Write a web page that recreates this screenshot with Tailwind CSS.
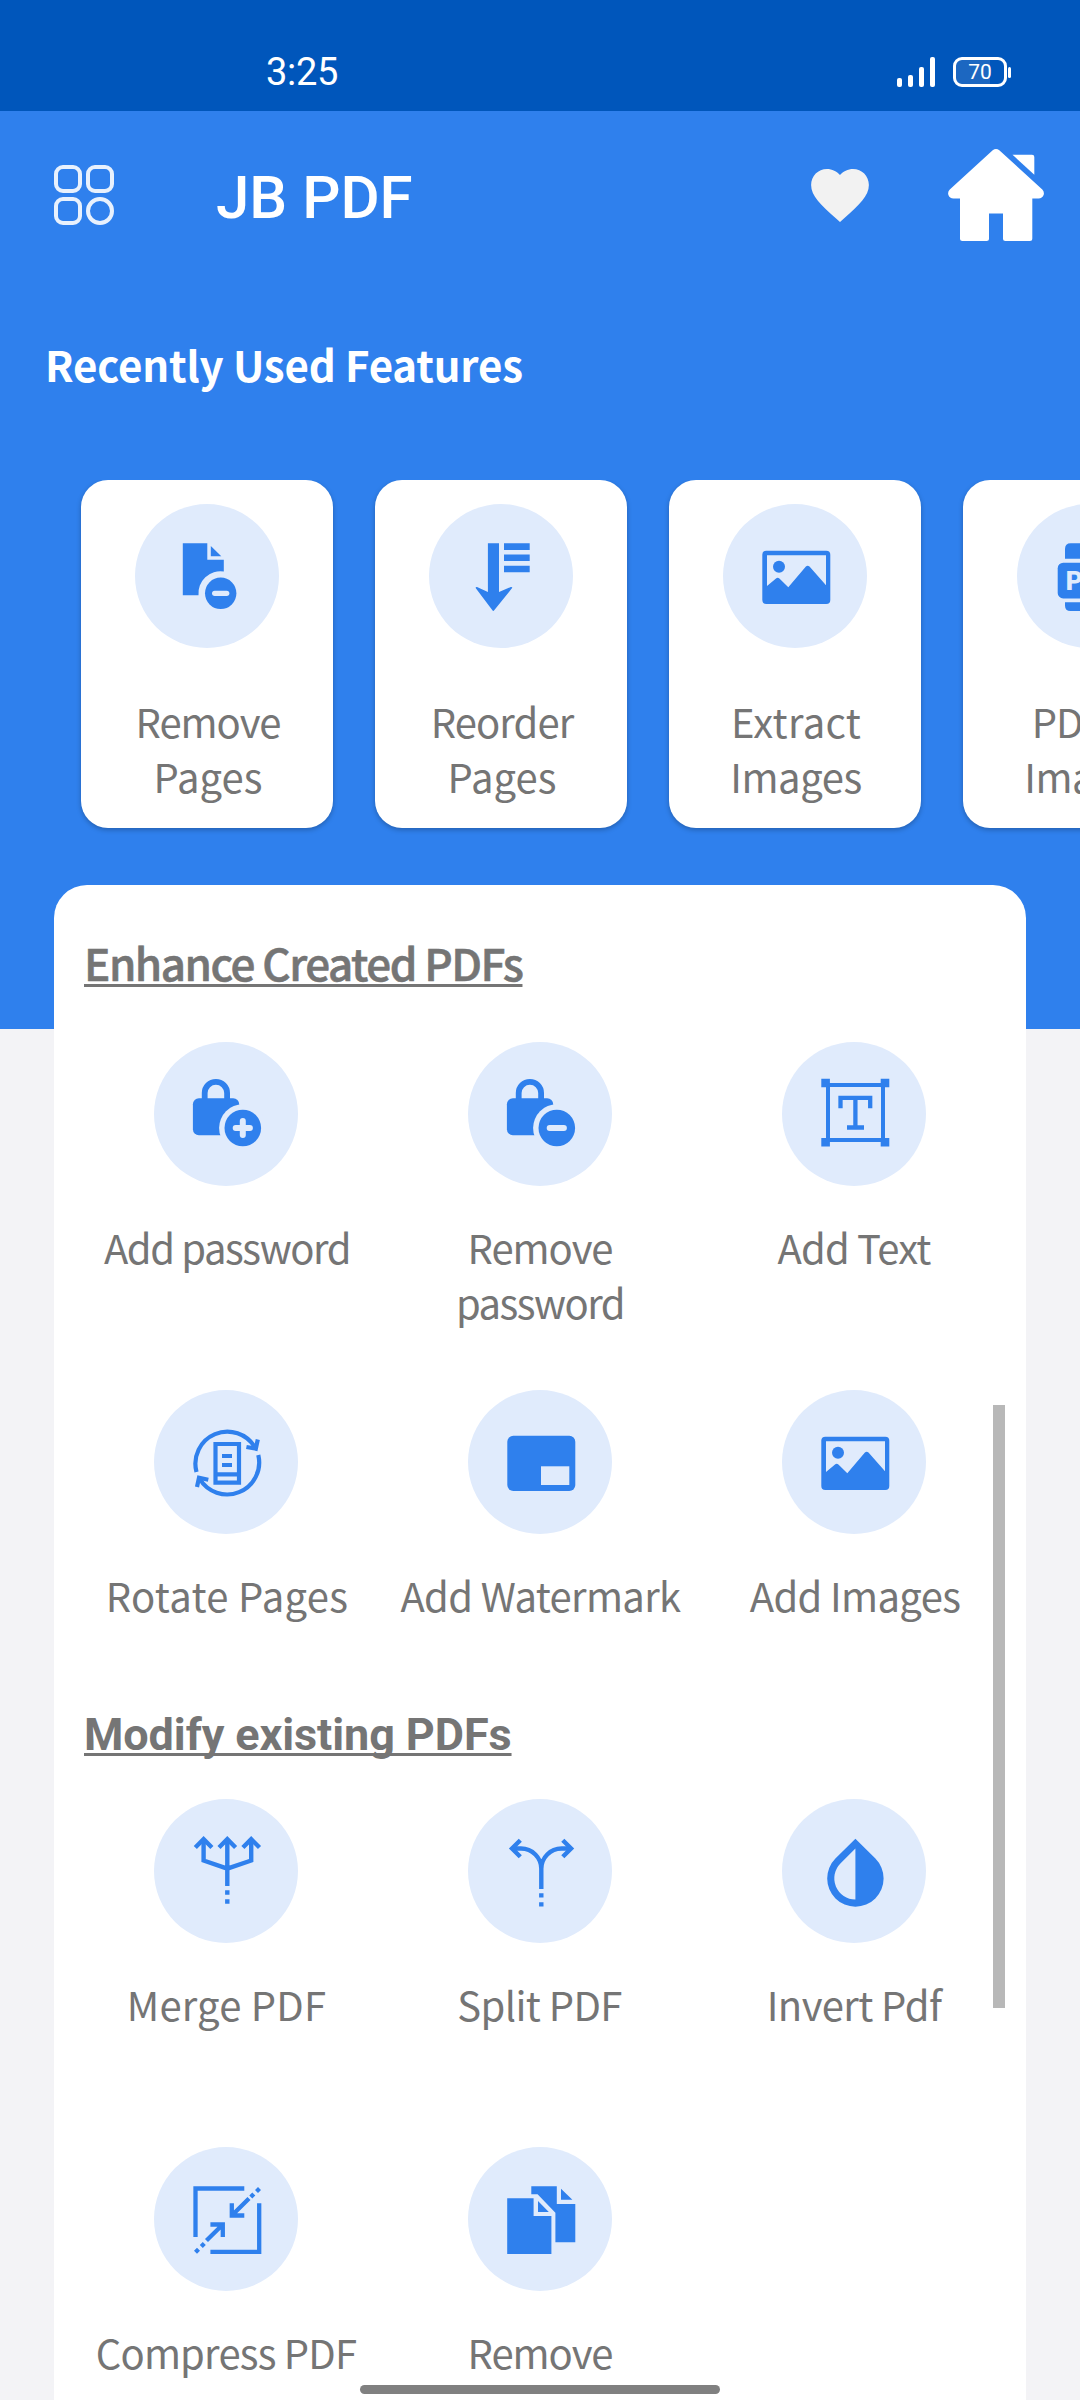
<!DOCTYPE html>
<html lang="en">
<head>
<meta charset="utf-8">
<title>JB PDF</title>
<script src="https://cdn.jsdelivr.net/npm/@tailwindcss/browser@4"></script>
</head>
<body class="bg-[#f3f3f6]">
<svg class="hidden">
  <symbol id="image" viewBox="0 0 144 144">
    <rect x="39.3" y="46.7" width="68" height="53.3" rx="4" fill="#2f80ed"/>
    <path fill="#e0ebfc" d="M44 51.3H103V81.3L86.5 62.6Q84.7 60.8 82.9 62.6L65.3 83.3L56.4 74.6Q54.7 73 53 74.6L44 82Z"/>
    <circle cx="56" cy="62.7" r="6" fill="#2f80ed"/>
  </symbol>
  <symbol id="lock" viewBox="0 0 144 144">
    <path fill="none" stroke="#2f80ed" stroke-width="5.8" d="M50.7 58V51a11.2 11.2 0 0 1 22.4 0V58"/>
    <rect x="38.9" y="56.3" width="46.3" height="37" rx="6" fill="#2f80ed"/>
    <circle cx="88.8" cy="86" r="23.7" fill="#e0ebfc"/>
    <circle cx="88.8" cy="86" r="18.3" fill="#2f80ed"/>
    <path stroke="#e0ebfc" stroke-width="6" stroke-linecap="round" d="M81.7 86H95.9"/>
  </symbol>
</svg>

<div class="relative h-[2400px] w-[1080px] overflow-hidden bg-[#f3f3f6] font-['Noto_Sans_CJK_SC',sans-serif] text-[#757575]">

  <header class="h-[1029px] bg-[#2f80ed] text-white">
    <!-- Status bar -->
    <div class="flex h-[111px] items-start justify-between bg-[#0056bb] pt-[57px] pr-[69px] pl-[266px]">
      <span class="mt-[-7px] font-[Roboto,sans-serif] text-[38px] leading-[45px] tracking-[-0.3px]">3:25</span>
      <div class="flex items-end gap-[18px]">
        <div class="flex h-[30px] items-end gap-[6px]">
          <span class="h-[9px] w-[5px] rounded-xs bg-white"></span>
          <span class="h-[12px] w-[5px] rounded-xs bg-white"></span>
          <span class="h-[20px] w-[5px] rounded-xs bg-white"></span>
          <span class="h-[30px] w-[5px] rounded-xs bg-white"></span>
        </div>
        <div class="flex items-center gap-px">
          <div class="flex h-[30px] w-[54px] items-center justify-center rounded-[9px] border-3 border-white bg-linear-to-r from-[#1c67c1] from-70% to-[#0056bb] to-70% font-[Roboto,sans-serif] text-[21px] leading-none">70</div>
          <span class="h-[11px] w-[3px] rounded-xs bg-white"></span>
        </div>
      </div>
    </div>

    <!-- App bar -->
    <div class="flex h-[168px] items-center pr-[36px] pl-[54px]">
      <svg class="size-[60px]" viewBox="0 0 60 60" fill="none" stroke="#e8f1fd" stroke-width="4">
        <rect x="2" y="2" width="24" height="24" rx="7"/><rect x="34" y="2" width="24" height="24" rx="7"/>
        <rect x="2" y="34" width="24" height="24" rx="7"/><circle cx="46" cy="46" r="12"/>
      </svg>
      <h1 class="ml-[102px] pt-[5px] font-[Roboto,sans-serif] text-[60px] leading-[72px] font-medium">JB PDF</h1>
      <svg class="ml-auto h-[53px] w-[58px]" viewBox="2 3 20 18.35" fill="#f2f2f2"><path d="M12 21.35l-1.45-1.32C5.4 15.36 2 12.28 2 8.5 2 5.42 4.42 3 7.5 3c1.74 0 3.41.81 4.5 2.09C13.09 3.81 14.76 3 16.5 3 19.58 3 22 5.42 22 8.5c0 3.78-3.4 6.86-8.55 11.54L12 21.35z"/></svg>
      <svg class="ml-[79px] h-[92px] w-[96px]" viewBox="948 149 96 92" fill="#fff">
        <path d="M992.7 150.3Q996 147.8 999.3 150.3L1042.3 189.5Q1044.6 192 1043.6 195Q1042.3 198.4 1038.5 198.4H1032.3V238.5Q1032.3 241 1029.8 241H1005.5Q1003 241 1003 238.5V213.5H989V238.5Q989 241 986.5 241H962.5Q960 241 960 238.5V198.4H953.5Q949.5 198.4 948.4 195Q947.4 192 949.8 189.5Z"/>
        <path d="M1012.5 154.7H1032Q1034.3 154.7 1034.3 157V174.7Z"/>
      </svg>
    </div>

    <h2 class="mt-[55px] pl-[45px] text-[42px] leading-[60px] font-bold tracking-[-0.15px]">Recently Used Features</h2>

    <div class="mt-[86px] flex gap-[42px] overflow-hidden pb-4 pl-[81px] text-[40px] leading-[55px] text-[#757575]">
      <div class="flex h-[348px] w-[252px] shrink-0 flex-col items-center rounded-[27px] bg-white pt-[24px] shadow-[0_2px_5px_rgba(0,0,0,0.25)]">
        <div class="size-[144px] shrink-0 rounded-full bg-[#e0ebfc]">
          <svg viewBox="0 0 144 144" fill="#2f80ed">
            <path d="M47.8 39.3H72.3V55.7H88.8V67.5A22 22 0 0 0 63.5 91.3H47.8Z"/><path d="M75.8 42L86.3 52.3H75.8Z"/>
            <circle cx="85.7" cy="89.3" r="15.7"/><path stroke="#e0ebfc" stroke-width="5.3" stroke-linecap="round" d="M79.7 89.3H91.7"/>
          </svg>
        </div>
        <p class="mt-[46px] pl-[2px] text-center"><span class="tracking-[-1px]">Remove</span><br>Pages</p>
      </div>
      <div class="flex h-[348px] w-[252px] shrink-0 flex-col items-center rounded-[27px] bg-white pt-[24px] shadow-[0_2px_5px_rgba(0,0,0,0.25)]">
        <div class="size-[144px] shrink-0 rounded-full bg-[#e0ebfc]">
          <svg viewBox="0 0 144 144" fill="#2f80ed">
            <path d="M58.9 39.3H70V88L81.8 83Q84.2 82.8 82.7 84.6L65.2 106.2Q64.3 107.7 63.4 106.2L47 84.6Q46 82.8 48 83L58.9 88Z"/>
            <path d="M75 39.3H100.7V46H75ZM75 50.5H100.7V57H75ZM75 61.7H100.7V68.2H75Z"/>
          </svg>
        </div>
        <p class="mt-[46px] pl-[2px] text-center"><span class="tracking-[-0.9px]">Reorder</span><br>Pages</p>
      </div>
      <div class="flex h-[348px] w-[252px] shrink-0 flex-col items-center rounded-[27px] bg-white pt-[24px] shadow-[0_2px_5px_rgba(0,0,0,0.25)]">
        <div class="size-[144px] shrink-0 rounded-full bg-[#e0ebfc]"><svg viewBox="0 0 144 144"><use href="#image"/></svg></div>
        <p class="mt-[46px] pl-[2px] text-center"><span class="tracking-[0.3px]">Extract</span><br><span class="tracking-[-0.4px]">Images</span></p>
      </div>
      <div class="flex h-[348px] w-[252px] shrink-0 flex-col items-center rounded-[27px] bg-white pt-[24px] shadow-[0_2px_5px_rgba(0,0,0,0.25)]">
        <div class="size-[144px] shrink-0 rounded-full bg-[#e0ebfc]">
          <svg viewBox="0 0 144 144" fill="#2f80ed">
            <path d="M48 54.7V45Q48 39.3 53.7 39.3H84L98 54.7Z"/>
            <rect x="40.7" y="58.7" width="66" height="35.7" rx="5.5"/>
            <path d="M48 98.3H98V101.5Q98 107 92.5 107H53.5Q48 107 48 101.5Z"/>
            <text x="48.7" y="86" fill="#e0ebfc" class="font-[Roboto,sans-serif] text-[26px] font-black">PDF</text>
          </svg>
        </div>
        <p class="mt-[46px] pl-[2px] text-center"><span class="tracking-[-1px]">PDF to</span><br><span class="tracking-[-0.4px]">Images</span></p>
      </div>
    </div>
  </header>

  <main class="relative mt-[-144px] ml-[54px] h-[1515px] w-[972px] rounded-t-[33px] bg-white px-[15px] pt-[45px]">
    <h2 class="pl-[15px] text-[44px] leading-[64px] font-medium tracking-[-1.5px] [-webkit-text-stroke:0.6px_#757575]"><span class="underline decoration-3 underline-offset-3 [text-decoration-skip-ink:none]">Enhance Created PDFs</span></h2>

    <div class="mt-[48px] grid grid-cols-3 gap-y-[36px] text-center text-[40px] leading-[55px]">
      <div class="flex h-[312px] flex-col items-center">
        <div class="size-[144px] rounded-full bg-[#e0ebfc]"><svg viewBox="0 0 144 144"><use href="#lock"/><path stroke="#e0ebfc" stroke-width="6" stroke-linecap="round" d="M88.8 78.9V93.1"/></svg></div>
        <p class="mt-[34px] pl-[2px] tracking-[-1.4px]">Add password</p>
      </div>
      <div class="flex h-[312px] flex-col items-center">
        <div class="size-[144px] rounded-full bg-[#e0ebfc]"><svg viewBox="0 0 144 144"><use href="#lock"/></svg></div>
        <p class="mt-[34px]"><span class="tracking-[-1px]">Remove</span><br><span class="tracking-[-1.5px]">password</span></p>
      </div>
      <div class="flex h-[312px] flex-col items-center">
        <div class="size-[144px] rounded-full bg-[#e0ebfc]">
          <svg viewBox="0 0 144 144" fill="#2f80ed">
            <rect x="46" y="43" width="55" height="55" fill="none" stroke="#2f80ed" stroke-width="4"/>
            <path d="M39.3 36.7h8.6v8.6h-8.6ZM98.7 36.7h8.6v8.6h-8.6ZM39.3 96h8.6v8.6h-8.6ZM98.7 96h8.6v8.6h-8.6Z"/>
            <path fill="none" stroke="#2f80ed" stroke-width="4.3" d="M58.5 66.3V55.8H88.2V66.3M73.4 55.8V85.5M65 85.5H82"/>
          </svg>
        </div>
        <p class="mt-[34px] tracking-[-0.8px]">Add Text</p>
      </div>
      <div class="flex h-[312px] flex-col items-center">
        <div class="size-[144px] rounded-full bg-[#e0ebfc]">
          <svg viewBox="0 0 144 144" fill="none" stroke="#2f80ed" stroke-width="4.2">
            <path d="M42.5 82A32 32 0 0 1 101 57.5M104.3 65A32 32 0 0 1 45.5 88.5"/>
            <path d="M103.8 49.5L101.8 58.7L92.4 57M43 97L45 87.8L54.3 89.7"/>
            <path d="M61.5 54H85V92.7H61.5ZM61.5 84.3H85M68 66H78M68 75H78"/>
          </svg>
        </div>
        <p class="mt-[34px] pl-[2px] tracking-[0.3px]">Rotate Pages</p>
      </div>
      <div class="flex h-[312px] flex-col items-center">
        <div class="size-[144px] rounded-full bg-[#e0ebfc]">
          <svg viewBox="0 0 144 144"><rect x="39.3" y="45.7" width="68" height="55.3" rx="6" fill="#2f80ed"/><path fill="#e0ebfc" d="M73 76.3H101.3V95H73Z"/></svg>
        </div>
        <p class="mt-[34px] pl-px tracking-[-0.65px]">Add Watermark</p>
      </div>
      <div class="flex h-[312px] flex-col items-center">
        <div class="size-[144px] rounded-full bg-[#e0ebfc]"><svg viewBox="0 0 144 144"><use href="#image"/></svg></div>
        <p class="mt-[34px] pl-[2px] tracking-[-0.65px]">Add Images</p>
      </div>
    </div>

    <h2 class="pt-px pl-[15px] font-[Roboto,sans-serif] text-[45px] leading-[64px] font-bold tracking-[-0.1px]"><span class="underline decoration-3 underline-offset-3 [text-decoration-skip-ink:none]">Modify existing PDFs</span></h2>

    <div class="mt-[32px] grid grid-cols-3 gap-y-[36px] text-center text-[40px] leading-[55px]">
      <div class="flex h-[312px] flex-col items-center">
        <div class="size-[144px] rounded-full bg-[#e0ebfc]">
          <svg viewBox="0 0 144 144" fill="none" stroke="#2f80ed" stroke-width="4.4">
            <path d="M49.6 40V61.5L73.3 69.7L97.2 61.5V40M73.3 40V87M73.3 91.3V95.7M73.3 100.3V104.7"/>
            <path d="M41.3 48.5L49.6 40.2L57.9 48.5M65 48.5L73.3 40.2L81.6 48.5M88.9 48.5L97.2 40.2L105.5 48.5"/>
          </svg>
        </div>
        <p class="mt-[34px] pl-px tracking-[0.2px]">Merge PDF</p>
      </div>
      <div class="flex h-[312px] flex-col items-center">
        <div class="size-[144px] rounded-full bg-[#e0ebfc]">
          <svg viewBox="0 0 144 144" fill="none" stroke="#2f80ed" stroke-width="4.4">
            <path d="M44 49.5H53A20.3 20.3 0 0 1 73.3 69.8V90M102.6 49.5H93.6A20.3 20.3 0 0 0 73.3 69.8M73.3 94.2V98.6M73.3 103.2V107.6"/>
            <path d="M52.3 41.2L44 49.5L52.3 57.8M94.8 41.2L103.1 49.5L94.8 57.8"/>
          </svg>
        </div>
        <p class="mt-[34px] pr-px tracking-[-0.6px]">Split PDF</p>
      </div>
      <div class="flex h-[312px] flex-col items-center">
        <div class="size-[144px] rounded-full bg-[#e0ebfc]">
          <svg viewBox="0 0 144 144" fill="#2f80ed"><path d="M73.4 39.7L93.4 59.6A28.2 28.2 0 1 1 53.4 59.6Z"/><path fill="#e0ebfc" d="M73.4 49.5V100.6A21.2 21.2 0 0 1 58.4 64.5Z"/></svg>
        </div>
        <p class="mt-[34px] tracking-[-0.6px]">Invert Pdf</p>
      </div>
      <div class="flex h-[312px] flex-col items-center">
        <div class="size-[144px] rounded-full bg-[#e0ebfc]">
          <svg viewBox="0 0 144 144" fill="none" stroke="#2f80ed" stroke-width="4.3">
            <path d="M41.5 90V41.5H90.3M105.2 56.3V104.9H56.4"/>
            <path d="M77.8 56.3V68.5H90.3M77.8 68.5L95 51.5M56.4 77.5H68.8V90M68.8 77.5L52.5 93.5"/>
            <path fill="#2f80ed" stroke="none" d="M98.3 45.6l3 3-3 3-3-3ZM104 39.9l3 3-3 3-3-3ZM48.8 95l3 3-3 3-3-3ZM43 100.7l3 3-3 3-3-3Z"/>
          </svg>
        </div>
        <p class="mt-[34px] tracking-[-0.8px]">Compress PDF</p>
      </div>
      <div class="flex h-[312px] flex-col items-center">
        <div class="size-[144px] rounded-full bg-[#e0ebfc]">
          <svg viewBox="0 0 144 144" fill="#2f80ed">
            <path d="M39.2 51.3H65.6V69H83.4V107H39.2ZM70 54L80.8 65H70Z"/>
            <path d="M63.3 39.3H88.8V57H107.3V95.3H87.4V65.7L69.6 47.3H63.3ZM93 41.7L104.4 52.7H93Z"/>
          </svg>
        </div>
        <p class="mt-[34px] tracking-[-1px]">Remove</p>
      </div>
    </div>

    <!-- Scroll thumb -->
    <div class="absolute top-[520px] left-[939px] h-[603px] w-[12px] bg-[#b8b8b8]"></div>
  </main>

  <!-- Gesture bar -->
  <div class="absolute bottom-[6px] left-[360px] h-[9px] w-[360px] rounded-full bg-[#808080]"></div>
</div>
</body>
</html>
